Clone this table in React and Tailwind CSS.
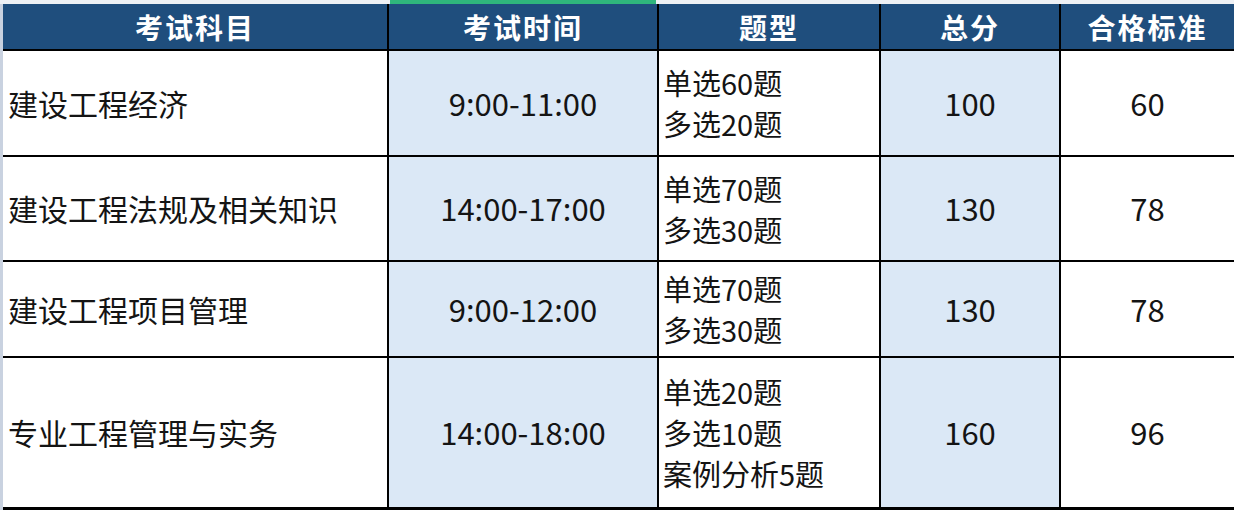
const rows = [
  { name: "建设工程经济", time: "9:00-11:00", types: ["单选60题", "多选20题"], total: "100", pass: "60", h: "h-[104px]" },
  { name: "建设工程法规及相关知识", time: "14:00-17:00", types: ["单选70题", "多选30题"], total: "130", pass: "78", h: "h-[103px]" },
  { name: "建设工程项目管理", time: "9:00-12:00", types: ["单选70题", "多选30题"], total: "130", pass: "78", h: "h-[94px]" },
  { name: "专业工程管理与实务", time: "14:00-18:00", types: ["单选20题", "多选10题", "案例分析5题"], total: "160", pass: "96", h: "h-[149px]" },
];

const heads = ["考试科目", "考试时间", "题型", "总分", "合格标准"];

function App() {
  return (
    <div
      className="w-[1234px] h-[510px] bg-[#eef1f5] overflow-hidden"
      style={{ fontFamily: '"Noto Sans CJK SC", "Noto Sans", sans-serif' }}
    >
      <div className="h-[4px] flex">
        <div className="w-[390px]"></div>
        <div className="w-[266px] bg-[#2fb67c]"></div>
      </div>
      <div className="flex">
        <div className="w-[3px] bg-[#c9d2e0]"></div>
        <div className="flex-1 bg-black pb-[3px] grid grid-cols-[384px_268px_220px_178px_1fr] gap-[2px]">
          {heads.map((t) => (
            <div key={t} className="h-[45px] bg-[#1f4e7d] text-white font-bold text-[28px] flex items-center justify-center tracking-[2px]">
              {t}
            </div>
          ))}
          {rows.map((r) => (
            <div key={r.name} className="contents">
              <div className={`${r.h} bg-white flex items-center pl-[5px] text-[30px] text-[#141414]`}>{r.name}</div>
              <div className={`${r.h} bg-[#dbe8f6] flex items-center justify-center text-[31px] text-[#141414]`}>{r.time}</div>
              <div className={`${r.h} bg-white flex flex-col justify-center pl-[4px] text-[29px] leading-[41px] text-[#141414]`}>
                {r.types.map((t) => (
                  <div key={t}>{t}</div>
                ))}
              </div>
              <div className={`${r.h} bg-[#dbe8f6] flex items-center justify-center text-[31px] text-[#141414]`}>{r.total}</div>
              <div className={`${r.h} bg-white flex items-center justify-center text-[31px] text-[#141414]`}>{r.pass}</div>
            </div>
          ))}
        </div>
      </div>
    </div>
  );
}

export default App;
